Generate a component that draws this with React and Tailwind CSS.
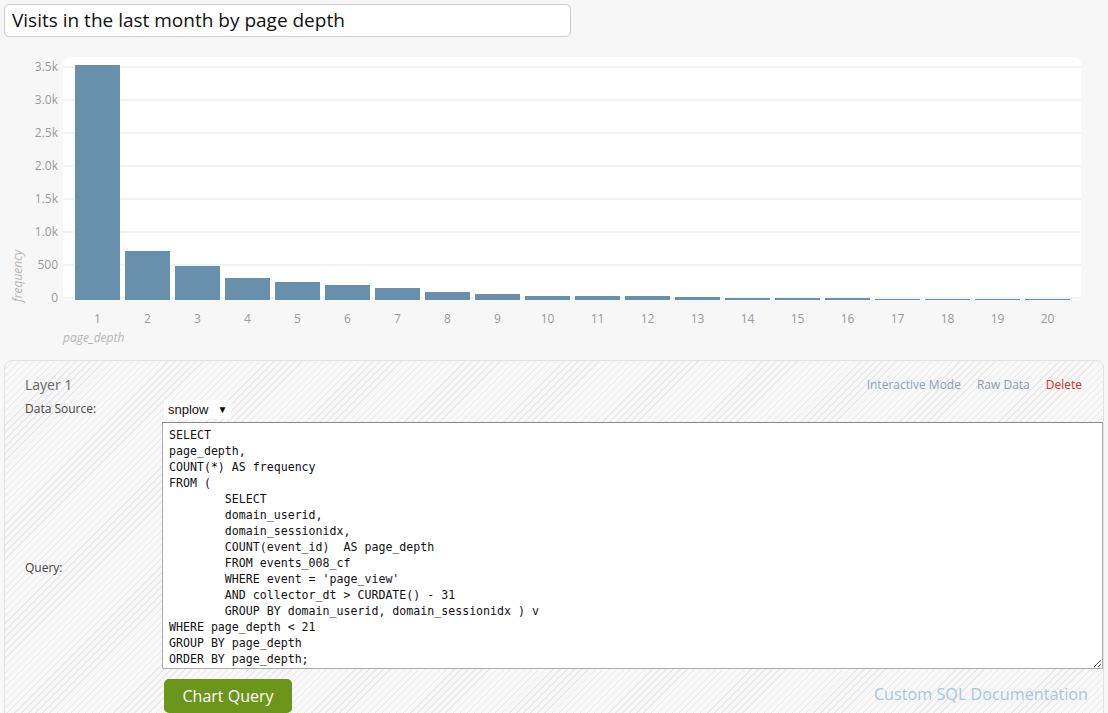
import React from "react";

// bar tops in px (bottom of the plot is y=300)
const BAR_TOPS = [65, 251, 266, 278, 282, 285, 288, 292, 294, 296, 296, 296, 297, 298, 298, 298, 299, 299, 299, 299];

const Y_TICKS = [
  { label: "3.5k", y: 67 },
  { label: "3.0k", y: 100 },
  { label: "2.5k", y: 133 },
  { label: "2.0k", y: 166 },
  { label: "1.5k", y: 199 },
  { label: "1.0k", y: 232 },
  { label: "500", y: 265 },
  { label: "0", y: 298 },
];

const SQL = `SELECT
page_depth,
COUNT(*) AS frequency
FROM (
        SELECT
        domain_userid,
        domain_sessionidx,
        COUNT(event_id)  AS page_depth
        FROM events_008_cf
        WHERE event = 'page_view'
        AND collector_dt > CURDATE() - 31
        GROUP BY domain_userid, domain_sessionidx ) v
WHERE page_depth < 21
GROUP BY page_depth
ORDER BY page_depth;`;

function DepthChart() {
  return (
    <svg
      width="1108"
      height="310"
      viewBox="0 40 1108 310"
      className="block"
      style={{ fontFamily: "'Open Sans', sans-serif" }}
    >
      {/* plot area */}
      <rect x="63" y="57" width="1018" height="243" rx="7" fill="#ffffff" />
      <rect x="63" y="80" width="1018" height="220" fill="#ffffff" />

      {/* gridlines + y labels */}
      {Y_TICKS.map((t) => (
        <g key={t.label}>
          <line x1="63" x2="1081" y1={t.y} y2={t.y} stroke="#efefef" strokeWidth="1.5" />
          <text x="58" y={t.y + 4} textAnchor="end" fontSize="12" fill="#9a9a9a">
            {t.label}
          </text>
        </g>
      ))}

      {/* bars */}
      {BAR_TOPS.map((top, i) => (
        <rect
          key={i}
          x={75 + i * 50}
          y={top}
          width="45"
          height={300 - top}
          fill="#6890ad"
        />
      ))}

      {/* x labels */}
      {BAR_TOPS.map((_, i) => (
        <text
          key={i}
          x={97.5 + i * 50}
          y="323"
          textAnchor="middle"
          fontSize="12"
          fill="#9a9a9a"
        >
          {i + 1}
        </text>
      ))}

      <text x="63" y="342" fontSize="12" fontStyle="italic" fill="#b5b5b5">
        page_depth
      </text>
      <text
        x="0"
        y="0"
        transform="translate(22 302) rotate(-90)"
        fontSize="12"
        fontStyle="italic"
        fill="#b5b5b5"
      >
        frequency
      </text>
    </svg>
  );
}

export default function App() {
  return (
    <div className="min-h-screen bg-[#f7f7f7] font-['Open_Sans',sans-serif] text-[#333]">
      {/* Title */}
      <div className="pl-[4px] pt-[4px]">
        <input
          type="text"
          defaultValue="Visits in the last month by page depth"
          className="block h-[33px] w-[567px] rounded-[5px] border border-[#cccccc] bg-white px-[7px] pb-[1px] text-[19px] text-[#111] outline-none"
        />
      </div>

      {/* Chart */}
      <div className="mt-[3px]">
        <DepthChart />
      </div>

      {/* Layer panel */}
      <div className="mx-[4px] mt-[10px] rounded-[8px] border border-[#e2e2e2] bg-[repeating-linear-gradient(135deg,#e9e9e9_0px,#e9e9e9_1px,#f8f8f8_1px,#f8f8f8_5px)] pb-[20px] pl-[20px] pr-[2px] pt-[14px]">
        <div className="flex h-[18px] items-center justify-between pr-[19px]">
          <span className="text-[14px] text-[#666]">Layer 1</span>
          <div className="flex gap-[16px] pt-[2px] text-[12px]">
            <a className="text-[#8fa2b3]">Interactive Mode</a>
            <a className="text-[#8f9ba6]">Raw Data</a>
            <a className="text-[#d9302c]">Delete</a>
          </div>
        </div>

        <div className="mt-[7px] grid grid-cols-[137px_1fr]">
          <div className="flex h-[18px] items-center text-[12px] text-[#444]">Data Source:</div>
          <div className="ml-[2px] flex h-[19px] w-[67px] items-center bg-white pl-[4px] font-['Liberation_Sans',Arial,sans-serif] text-[13px] text-[#111]">
            snplow
            <span className="ml-[9px] text-[10px]">▼</span>
          </div>

          <div className="flex items-center pt-[48px] text-[12px] text-[#444]">Query:</div>
          <textarea
            defaultValue={SQL}
            spellCheck={false}
            className="mt-[3px] block h-[247px] w-[941px] resize border border-[#aaaaaa] border-t-[#888] bg-white px-[6px] py-[4px] font-['DejaVu_Sans_Mono',monospace] text-[11.6px] leading-[16px] text-[#111] outline-none [tab-size:8]"
          />

          <div />
          <div className="mt-[10px] flex items-start justify-between pr-[15px]">
            <button className="ml-[2px] h-[34px] w-[128px] rounded-[5px] bg-[#6b961b] text-[16px] text-white">
              Chart Query
            </button>
            <a className="mt-[3px] text-[16.2px] text-[#a9c7dc]">Custom SQL Documentation</a>
          </div>
        </div>
      </div>
    </div>
  );
}
